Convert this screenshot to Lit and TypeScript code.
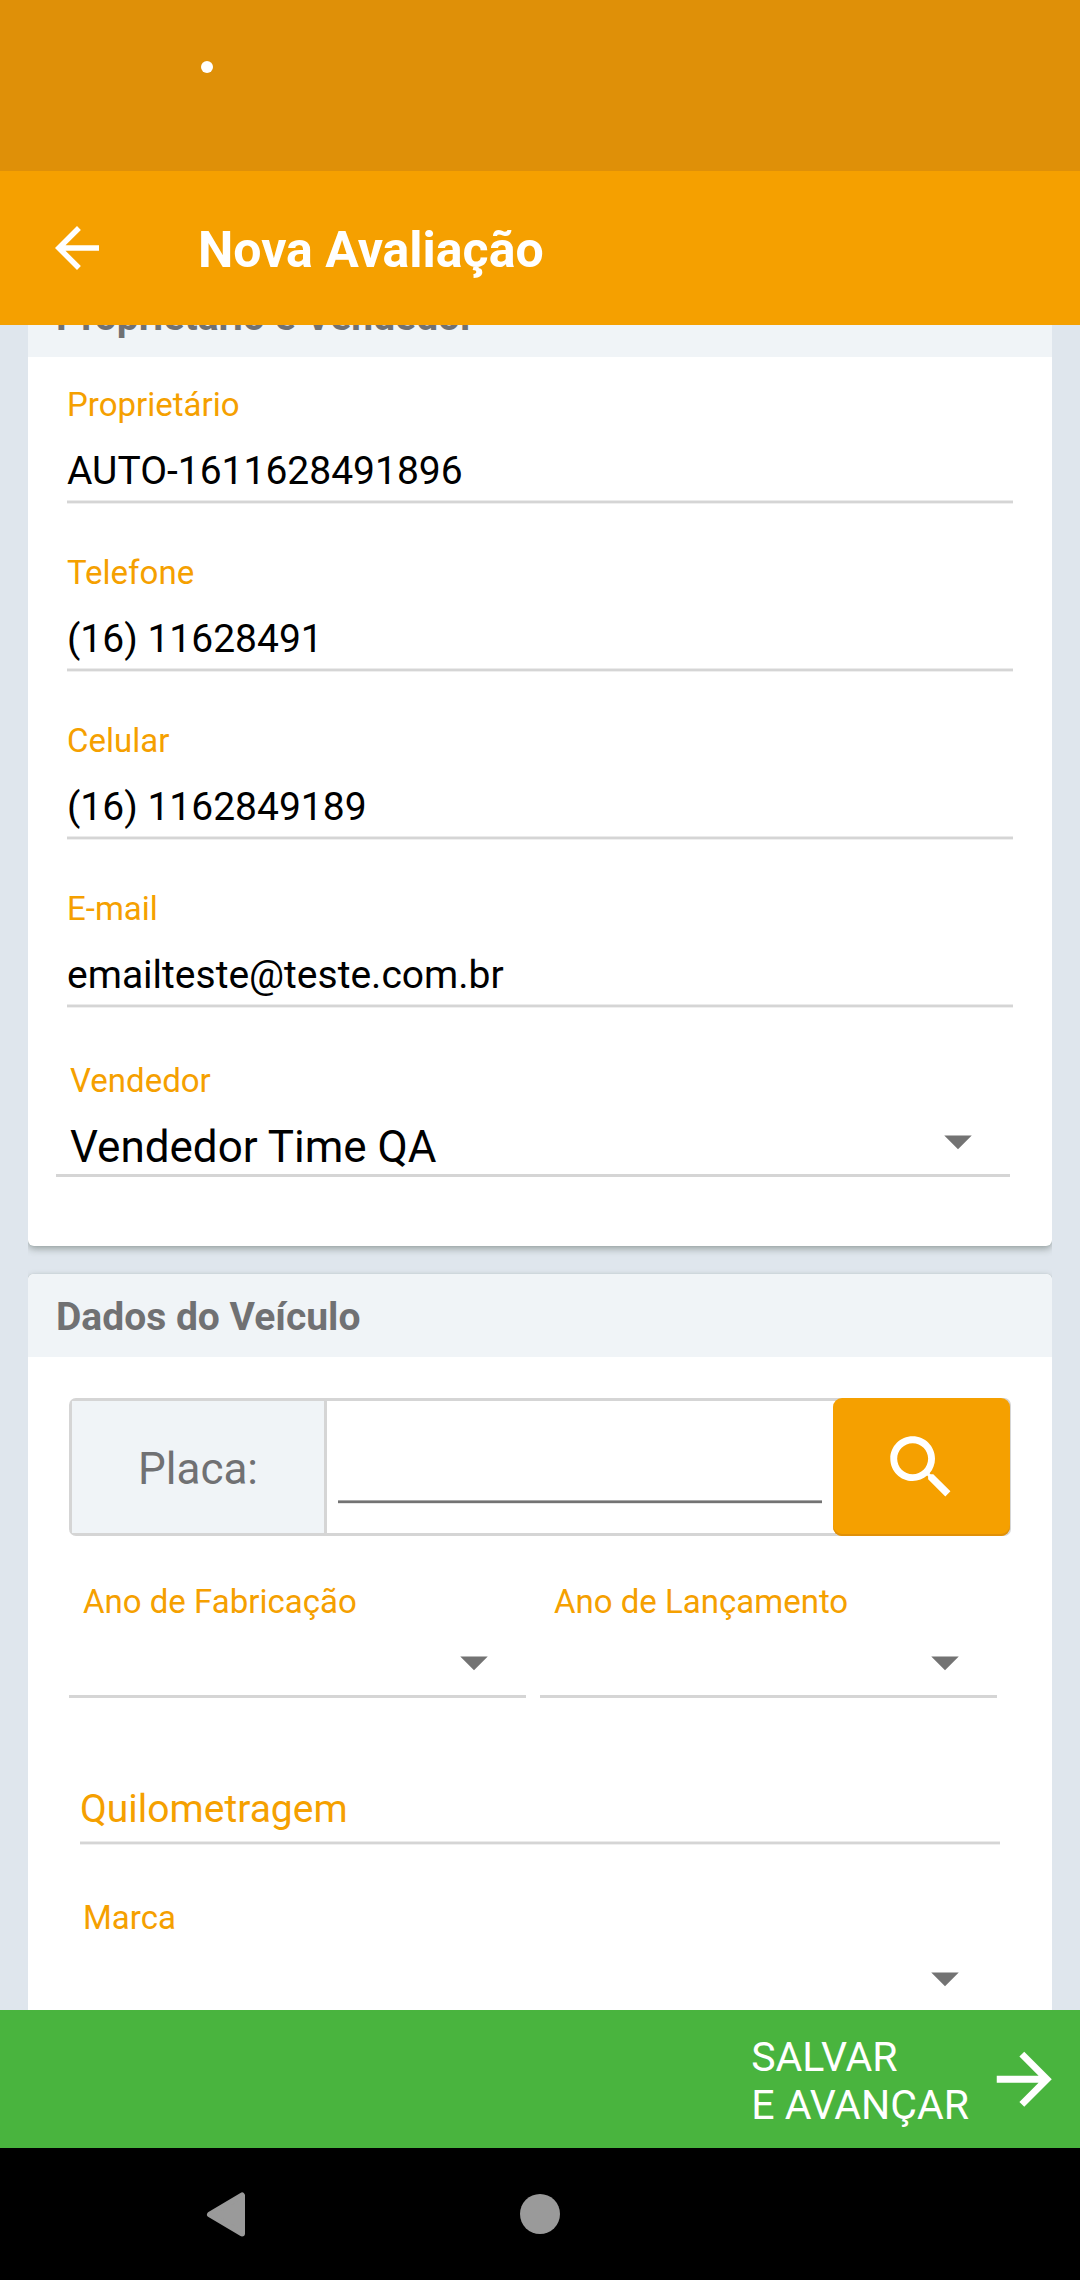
import { LitElement, html, css } from "lit";
import { customElement, property } from "lit/decorators.js";

const ORANGE = css`#f5a000`;
const GREY = css`#707173`;
const LINE = css`#d5d5d5`;

@customElement("text-field")
class TextField extends LitElement {
  static styles = css`
    :host { display: block; padding: 28px 39px 21px; }
    .label { font-size: 33px; line-height: 40px; color: ${ORANGE}; white-space: nowrap; }
    .value { margin-top: 23px; font-size: 39px; line-height: 46px; color: #000; white-space: nowrap; }
    .rule {
      margin-top: 6px; height: 4px;
      background: linear-gradient(#ebebeb 0 25%, ${LINE} 25% 75%, #efefef 75% 100%);
    }
  `;
  @property() label = "";
  @property() value = "";
  render() {
    return html`
      <div class="label">${this.label}</div>
      <div class="value">${this.value}</div>
      <div class="rule"></div>
    `;
  }
}

@customElement("select-field")
class SelectField extends LitElement {
  static styles = css`
    :host { display: block; }
    .label { padding-left: 14px; font-size: 33px; line-height: 40px; color: ${ORANGE}; white-space: nowrap; }
    .row {
      display: flex; justify-content: space-between; align-items: flex-start;
      height: 52px; margin-top: 20px; padding: 0 38px 1px 14px; border-bottom: 3px solid ${LINE};
    }
    .value { font-size: 44px; line-height: 52px; color: #000; white-space: nowrap; }
    .caret { display: block; width: 28px; height: 15px; margin-top: 14px; }
  `;
  @property() label = "";
  @property() value = "";
  render() {
    return html`
      <div class="label">${this.label}</div>
      <div class="row">
        <span class="value">${this.value}</span>
        <svg class="caret" viewBox="0 0 28 15"><path d="M.25 .5h27.5L14 14.25z" fill="#737373" /></svg>
      </div>
    `;
  }
}

@customElement("app-root")
class AppRoot extends LitElement {
  static styles = css`
    :host {
      display: flex; flex-direction: column; width: 1080px; height: 2280px; overflow: hidden;
      font-family: Roboto, "Noto Sans", sans-serif; background: #dfe6ed;
    }
    .status { flex: none; height: 171px; box-sizing: border-box; padding: 61px 0 0 201px; background: #df9008; }
    .dot { width: 12px; height: 12px; border-radius: 50%; background: #fff; }
    .bar { flex: none; height: 154px; display: flex; align-items: center; background: ${ORANGE}; color: #fff; }
    .back { width: 66px; height: 66px; margin-left: 44px; }
    .title { margin: 4px 0 0 88px; font-size: 50px; line-height: 58px; font-weight: 700; white-space: nowrap; }
    .scroll { flex: none; height: 1685px; overflow: hidden; }
    .cards { margin: 0 28px; height: 1685px; overflow: hidden; }
    .card {
      margin-bottom: 28px; border-radius: 6px; background: #fff; overflow: hidden;
      box-shadow: 0 3px 7px rgba(70, 85, 75, 0.45), 0 0 2px rgba(70, 85, 75, 0.1);
    }
    .card.first { margin-top: -51px; height: 972px; }
    .card.second { height: 800px; }
    .head {
      height: 83px; box-sizing: border-box; padding: 20px 0 0 28px; background: #f0f4f7;
      font-size: 39px; line-height: 46px; font-weight: 700; color: ${GREY}; white-space: nowrap;
    }
    .seller { margin: 32px 42px 0 28px; }
    .plate {
      display: flex; box-sizing: border-box; height: 138px; margin: 41px 41px 46px;
      border: 3px solid ${LINE}; border-radius: 7px;
    }
    .plate-label {
      width: 252px; display: flex; align-items: center; justify-content: center;
      border-right: 3px solid ${LINE}; background: #f0f4f7; font-size: 44px; line-height: 52px; color: ${GREY};
    }
    .plate-text { padding-top: 4px; }
    .plate-input { flex: 1; margin: 0 11px; padding-top: 99px; }
    .plate-rule { height: 4px; background: linear-gradient(#a9a9a9 0 25%, #737373 25% 75%, #e6e6e6 75% 100%); }
    .search {
      flex: none; width: 177px; height: 138px; margin: -3px -2px -3px 0; box-sizing: border-box;
      display: flex; align-items: center; justify-content: center;
      background: ${ORANGE}; border-radius: 9px; box-shadow: inset 0 -2px #e09008;
    }
    .search svg, .next { width: 82.5px; height: 82.5px; }
    .years { display: grid; grid-template-columns: 457px 457px; column-gap: 14px; margin-left: 41px; }
    .km { margin: 88px 52px 53px; font-size: 39px; line-height: 46px; color: ${ORANGE}; }
    .km-rule {
      margin-top: 9px; height: 4px;
      background: linear-gradient(#ebebeb 0 25%, ${LINE} 25% 75%, #efefef 75% 100%);
    }
    .brand { margin: 0 55px 0 41px; }
    .save {
      flex: none; height: 138px; display: flex; align-items: center; justify-content: flex-end;
      background: #49b43e; color: #fff;
    }
    .save-text { padding-top: 3px; font-size: 41px; line-height: 48px; margin-right: 14px; white-space: nowrap; }
    .next { margin-right: 14.5px; }
    .nav { flex: none; height: 132px; background: #000; }
    .nav svg { display: block; width: 1080px; height: 132px; }
  `;

  private owner = [
    ["Proprietário", "AUTO-1611628491896"],
    ["Telefone", "(16) 11628491"],
    ["Celular", "(16) 1162849189"],
    ["E-mail", "emailteste@teste.com.br"],
  ];

  render() {
    return html`
      <div class="status"><div class="dot"></div></div>
      <header class="bar">
        <svg class="back" viewBox="0 0 24 24"><path fill="#fff" d="M20 11H7.83l5.59-5.59L12 4l-8 8 8 8 1.41-1.41L7.83 13H20v-2z" /></svg>
        <div class="title">Nova Avaliação</div>
      </header>
      <main class="scroll">
        <div class="cards">
          <section class="card first">
            <div class="head">Proprietário e Vendedor</div>
            ${this.owner.map(([l, v]) => html`<text-field .label=${l} .value=${v}></text-field>`)}
            <select-field class="seller" label="Vendedor" value="Vendedor Time QA"></select-field>
          </section>
          <section class="card second">
            <div class="head">Dados do Veículo</div>
            <div class="plate">
              <div class="plate-label"><span class="plate-text">Placa:</span></div>
              <div class="plate-input"><div class="plate-rule"></div></div>
              <div class="search">
                <svg viewBox="0 0 24 24"><path fill="#fff" d="M15.5 14h-.79l-.28-.27C15.41 12.59 16 11.11 16 9.5 16 5.91 13.09 3 9.5 3S3 5.91 3 9.5 5.91 16 9.5 16c1.61 0 3.09-.59 4.23-1.57l.27.28v.79l5 4.99L20.49 19l-4.99-5zm-6 0C7.01 14 5 11.99 5 9.5S7.01 5 9.5 5 14 7.01 14 9.5 11.99 14 9.5 14z" /></svg>
              </div>
            </div>
            <div class="years">
              <select-field label="Ano de Fabricação"></select-field>
              <select-field label="Ano de Lançamento"></select-field>
            </div>
            <div class="km">Quilometragem<div class="km-rule"></div></div>
            <select-field class="brand" label="Marca"></select-field>
          </section>
        </div>
      </main>
      <div class="save">
        <div class="save-text">SALVAR<br />E AVANÇAR</div>
        <svg class="next" viewBox="0 0 24 24"><path fill="#fff" d="M12 4l-1.410 1.410L16.170 11H4v2h12.170l-5.580 5.590L12 20l8-8z" /></svg>
      </div>
      <nav class="nav">
        <svg viewBox="0 0 1080 132">
          <path d="M210 66.500L242 47.500V85.500z" fill="#9a9a9a" stroke="#9a9a9a" stroke-width="6" stroke-linejoin="round" />
          <circle cx="540" cy="66" r="20" fill="#9a9a9a" />
        </svg>
      </nav>
    `;
  }
}
